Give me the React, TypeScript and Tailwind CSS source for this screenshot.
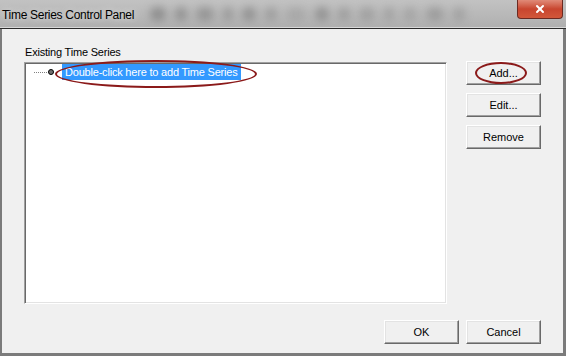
import { X } from "lucide-react";

const raised =
  "border border-t-white border-l-white border-b-[#696969] border-r-[#696969] shadow-[inset_-1px_-1px_0_#a0a0a0,inset_1px_1px_0_#e3e3e3] bg-[#f0f0f0]";

function Btn({ label, className = "" }: { label: string; className?: string }) {
  return (
    <button
      className={`${raised} w-[75px] h-[24px] flex items-center justify-center text-[11px] text-black leading-none ${className}`}
    >
      {label}
    </button>
  );
}

// blurred shapes behind the glass title bar
const blobs = [
  { w: 16, o: 0.55 },
  { w: 12, o: 0.5 },
  { w: 18, o: 0.45 },
  { w: 10, o: 0.4 },
  { w: 14, o: 0.5 },
  { w: 12, o: 0.35 },
  { w: 20, o: 0.2 },
  { w: 14, o: 0.5 },
  { w: 12, o: 0.35 },
  { w: 16, o: 0.3 },
  { w: 10, o: 0.3 },
  { w: 14, o: 0.25 },
  { w: 18, o: 0.35 },
  { w: 12, o: 0.3 },
];

export default function App() {
  return (
    <div
      className="w-[566px] h-[356px] flex flex-col bg-[#7b7b7b] overflow-hidden"
      style={{ fontFamily: '"Liberation Sans", Arial, sans-serif' }}
    >
      {/* title bar */}
      <div className="relative h-[27px] flex items-start justify-between bg-gradient-to-b from-[#c2c2c2] to-[#b0b0b0] overflow-hidden">
        <div className="absolute left-[150px] top-[3px] w-[340px] h-[22px] flex items-center gap-[9px] blur-[4px]">
          {blobs.map((b, i) => (
            <span
              key={i}
              className="h-[14px] rounded-full bg-[#6a6a6a]"
              style={{ width: b.w, opacity: b.o }}
            />
          ))}
        </div>
        <span className="relative pl-[2px] pt-[6px] text-[12px] text-black tracking-[-0.3px] [text-shadow:0_0_6px_#e8e8e8]">
          Time Series Control Panel
        </span>
        <div className="relative mr-[3px] w-[46px] h-[19px] rounded-b-[4px] border border-t-0 border-[#6b2a22] bg-gradient-to-b from-[#e08a78] via-[#c8452f] to-[#d2573a] flex items-center justify-center">
          <X className="size-[12px] text-white" strokeWidth={4} />
        </div>
      </div>
      <div className="h-[2px] bg-[#2b2b2b] border-t border-[#d8d8d8]" />

      {/* client area */}
      <div className="flex-1 ml-[2px] mr-[3px] mb-[3px] bg-[#f0f0f0] flex flex-col">
        <div className="flex pl-[22px] pt-[16px]">
          <div className="flex flex-col">
            <span className="ml-[1px] h-[14px] text-[11px] leading-[14px] text-black tracking-[-0.2px]">
              Existing Time Series
            </span>
            <div className="mt-[3px] w-[423px] h-[242px] bg-white border border-t-[#a0a0a0] border-l-[#a0a0a0] border-b-white border-r-white shadow-[inset_1px_1px_0_#696969,inset_-1px_-1px_0_#e3e3e3]">
              <div className="relative flex items-center h-[16px] mt-[1px] pl-[9px]">
                <span className="w-[13px] border-t border-dotted border-[#808080]" />
                <span className="ml-[1px] w-[6px] h-[6px] rounded-full bg-[#707070] border border-black" />
                <span className="ml-[8px] h-[16px] px-[3px] bg-[#3399ff] text-white text-[11px] leading-[16px] tracking-[-0.2px] whitespace-nowrap">
                  Double-click here to add Time Series
                </span>
                <span className="absolute left-[30px] top-[-4px] w-[202px] h-[28px] rounded-[50%] border-[2px] border-[#8b1a1a]" />
              </div>
            </div>
          </div>
          <div className="ml-[19px] mt-[16px] flex flex-col gap-[8px]">
            <div className="relative">
              <Btn label="Add..." />
              <span className="absolute left-[9px] top-[1px] w-[52px] h-[22px] rounded-[50%] border-[2px] border-[#8b1a1a]" />
            </div>
            <Btn label="Edit..." />
            <Btn label="Remove" />
          </div>
        </div>
        <div className="mt-auto mb-[9px] mr-[22px] flex justify-end gap-[7px]">
          <Btn label="OK" />
          <Btn label="Cancel" />
        </div>
      </div>
    </div>
  );
}
